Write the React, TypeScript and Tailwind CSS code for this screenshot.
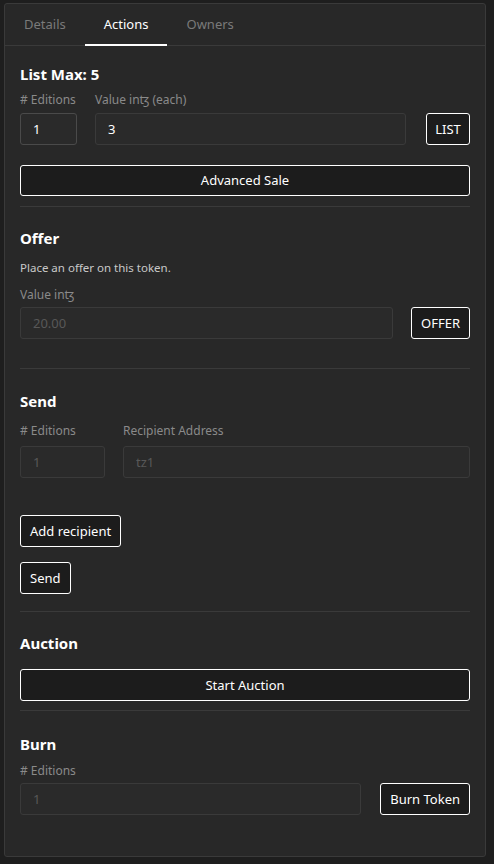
import React, { useState } from 'react';

const tabs = ['Details', 'Actions', 'Owners'];

const Label: React.FC<{ children: React.ReactNode; className?: string }> = ({ children, className = '' }) => (
  <div className={`text-[12px] leading-[18px] text-[#8a8a8a] ${className}`}>{children}</div>
);

const inputCls =
  'h-8 rounded-[3px] border border-[#3a3a3a] bg-[#2a2a2a] px-3 text-[13px] text-white placeholder:text-[#585858] outline-none';

const btnCls =
  'rounded-[3px] border border-white bg-[#1c1c1c] text-[13px] text-white leading-none';

const Divider = () => <div className="h-px bg-[#3a3a3a]" />;

const App: React.FC = () => {
  const [active, setActive] = useState(1);

  return (
    <div className="min-h-[864px] bg-[#1e1e1e] pt-[3px] pl-1 pr-2" style={{ fontFamily: '"Noto Sans", sans-serif' }}>
      <div className="h-[854px] rounded-[3px] border border-[#3a3a3a] bg-[#282828]">
        <div className="flex h-[42px] border-b border-[#3a3a3a]">
          {tabs.map((t, i) => (
            <button
              key={t}
              onClick={() => setActive(i)}
              className={`relative px-[19px] text-[13px] ${active === i ? 'text-white' : 'text-[#7a7a7a]'}`}
            >
              {t}
              {active === i && <span className="absolute bottom-[-1px] left-0 right-0 h-[2px] bg-white" />}
            </button>
          ))}
        </div>

        <div className="px-[15px]">
          {/* List */}
          <h3 className="mt-[17px] text-[15px] font-bold leading-[22px] text-white">List Max: 5</h3>
          <div className="mt-[6px] flex gap-[18px]">
            <div>
              <Label>&#35; Editions</Label>
              <input className={`${inputCls} mt-[4px] w-[57px] border-[#4a4a4a]`} defaultValue="1" />
            </div>
            <div className="flex-1">
              <Label>Value in&#xA729; (each)</Label>
              <input className={`${inputCls} mt-[4px] w-full`} defaultValue="3" />
            </div>
            <button className={`${btnCls} mt-[22px] ml-[2px] h-8 w-[44px]`}>LIST</button>
          </div>
          <button className={`${btnCls} mt-5 h-[31px] w-full`}>Advanced Sale</button>
          <div className="mt-[10px]"><Divider /></div>

          {/* Offer */}
          <h3 className="mt-[20px] text-[15px] font-bold leading-[22px] text-white">Offer</h3>
          <p className="mt-[11px] text-[11.5px] leading-[16px] text-[#c8c8c8]">Place an offer on this token.</p>
          <Label className="mt-[10px]">Value in&#xA729;</Label>
          <div className="mt-[3px] flex items-center gap-[18px]">
            <input className={`${inputCls} flex-1`} placeholder="20.00" />
            <button className={`${btnCls} h-8 w-[59px]`}>OFFER</button>
          </div>
          <div className="mt-[29px]"><Divider /></div>

          {/* Send */}
          <h3 className="mt-[21px] text-[15px] font-bold leading-[22px] text-white">Send</h3>
          <div className="mt-[10px] flex gap-[18px]">
            <div>
              <Label>&#35; Editions</Label>
              <input className={`${inputCls} mt-[6px] w-[85px]`} placeholder="1" />
            </div>
            <div className="flex-1">
              <Label>Recipient Address</Label>
              <input className={`${inputCls} mt-[6px] w-full`} placeholder="tz1" />
            </div>
          </div>
          <button className={`${btnCls} mt-[37px] block h-8 px-[9px]`}>Add recipient</button>
          <button className={`${btnCls} mt-[15px] block h-8 px-[9px]`}>Send</button>
          <div className="mt-[17px]"><Divider /></div>

          {/* Auction */}
          <h3 className="mt-[20px] text-[15px] font-bold leading-[22px] text-white">Auction</h3>
          <button className={`${btnCls} mt-[15px] h-[32px] w-full`}>Start Auction</button>
          <div className="mt-[9px]"><Divider /></div>

          {/* Burn */}
          <h3 className="mt-[22px] text-[15px] font-bold leading-[22px] text-white">Burn</h3>
          <Label className="mt-[7px]">&#35; Editions</Label>
          <div className="mt-[3px] flex items-center gap-[19px]">
            <input className={`${inputCls} flex-1`} placeholder="1" />
            <button className={`${btnCls} h-8 px-[9px]`}>Burn Token</button>
          </div>
        </div>
      </div>
    </div>
  );
};

export default App;
